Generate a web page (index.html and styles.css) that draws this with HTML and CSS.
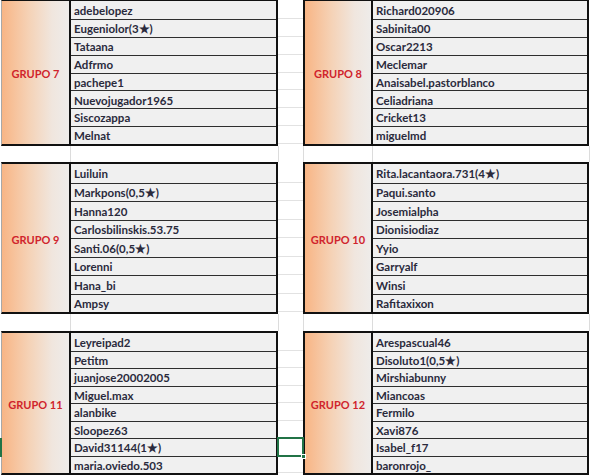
FILE: index.html
```html
<!DOCTYPE html>
<html>
<head>
<meta charset="utf-8">
<link rel="stylesheet" href="styles.css">
</head>
<body>
<div class="sheet">
  <div class="band band1">
    <div class="strip"></div>
    <div class="block a">
      <div class="label">GRUPO 7</div>
      <div class="names">
        <div class="name">adebelopez</div>
        <div class="name">Eugeniolor(3★)</div>
        <div class="name">Tataana</div>
        <div class="name">Adfrmo</div>
        <div class="name">pachepe1</div>
        <div class="name">Nuevojugador1965</div>
        <div class="name">Siscozappa</div>
        <div class="name">Melnat</div>
      </div>
    </div>
    <div class="gapcol"><i></i><i></i><i></i><i></i><i></i><i></i><i></i><i></i></div>
    <div class="block b">
      <div class="label">GRUPO 8</div>
      <div class="names">
        <div class="name">Richard020906</div>
        <div class="name">Sabinita00</div>
        <div class="name">Oscar2213</div>
        <div class="name">Meclemar</div>
        <div class="name">Anaisabel.pastorblanco</div>
        <div class="name">Celiadriana</div>
        <div class="name">Cricket13</div>
        <div class="name">miguelmd</div>
      </div>
    </div>
    <div class="strip"></div>
  </div>

  <div class="spacer gap1"></div>

  <div class="band band2">
    <div class="strip"></div>
    <div class="block a">
      <div class="label">GRUPO 9</div>
      <div class="names">
        <div class="name">Luiluin</div>
        <div class="name">Markpons(0,5★)</div>
        <div class="name">Hanna120</div>
        <div class="name">Carlosbilinskis.53.75</div>
        <div class="name">Santi.06(0,5★)</div>
        <div class="name">Lorenni</div>
        <div class="name">Hana_bi</div>
        <div class="name">Ampsy</div>
      </div>
    </div>
    <div class="gapcol"><i></i><i></i><i></i><i></i><i></i><i></i><i></i><i></i></div>
    <div class="block b">
      <div class="label">GRUPO 10</div>
      <div class="names">
        <div class="name">Rita.lacantaora.731(4★)</div>
        <div class="name">Paqui.santo</div>
        <div class="name">Josemialpha</div>
        <div class="name">Dionisiodiaz</div>
        <div class="name">Yyio</div>
        <div class="name">Garryalf</div>
        <div class="name">Winsi</div>
        <div class="name">Rafitaxixon</div>
      </div>
    </div>
    <div class="strip"></div>
  </div>

  <div class="spacer gap2"></div>

  <div class="band band3">
    <div class="strip"><b class="rowsel"></b></div>
    <div class="block a">
      <div class="label">GRUPO 11</div>
      <div class="names">
        <div class="name">Leyreipad2</div>
        <div class="name">Petitm</div>
        <div class="name">juanjose20002005</div>
        <div class="name">Miguel.max</div>
        <div class="name">alanbike</div>
        <div class="name">Sloopez63</div>
        <div class="name">David31144(1★)</div>
        <div class="name">maria.oviedo.503</div>
      </div>
    </div>
    <div class="gapcol"><i></i><i></i><i></i><i></i><i></i><i></i><i class="sel"><b class="handle"></b></i><i></i></div>
    <div class="block b">
      <div class="label">GRUPO 12</div>
      <div class="names">
        <div class="name">Arespascual46</div>
        <div class="name">Disoluto1(0,5★)</div>
        <div class="name">Mirshiabunny</div>
        <div class="name">Miancoas</div>
        <div class="name">Fermilo</div>
        <div class="name">Xavi876</div>
        <div class="name">Isabel_f17</div>
        <div class="name">baronrojo_</div>
      </div>
    </div>
    <div class="strip"></div>
  </div>
</div>
</body>
</html>
```

FILE: styles.css
```css
* { box-sizing: border-box; }
html, body { margin: 0; padding: 0; background: #ffffff; }
body { width: 590px; height: 476px; overflow: hidden; font-family: Lato, "Open Sans", sans-serif; }

.sheet { display: flex; flex-direction: column; width: 590px; }

.band { display: flex; }
.band1 { height: 146px; }
.band2 { height: 152px; }
.band3 { height: 144px; }

.spacer {
  background:
    linear-gradient(#dcdcdc, #dcdcdc) 70px 0 / 1px 100% no-repeat,
    linear-gradient(#dcdcdc, #dcdcdc) 278px 0 / 1px 100% no-repeat,
    linear-gradient(#dcdcdc, #dcdcdc) 303px 0 / 1px 100% no-repeat,
    linear-gradient(#dcdcdc, #dcdcdc) 372px 0 / 1px 100% no-repeat,
    linear-gradient(#dcdcdc, #dcdcdc) 589px 0 / 1px 100% no-repeat,
    #ffffff;
}
.gap1 { height: 16px; }
.gap2 { height: 17px; }

.strip { width: 1px; position: relative; }
.rowsel { position: absolute; left: 0; width: 2px; top: 107px; height: 19px; background: #217346; }

.block {
  display: grid;
  border-top: 2px solid #111;
  border-bottom: 2px solid #111;
  border-right: 2px solid #111;
}
.band1 .block { border-top-width: 1px; }
.block.a { width: 277px; grid-template-columns: 69px 1fr; border-left: 1px solid #a8a8a8; }
.block.b { width: 286px; grid-template-columns: 68px 1fr; border-left: 2px solid #111; }

.label {
  display: flex;
  align-items: center;
  justify-content: center;
  border-right: 2px solid #111;
  background: linear-gradient(to right, #f8b585 0%, #f5d2b6 40%, #f0e6de 75%, #eeecea 100%);
  color: #d0242c;
  font-weight: 700;
  font-size: 11px;
  padding-top: 2px;
}

.names { display: grid; grid-template-rows: repeat(8, 1fr); background: #f0f0f0; }
.name {
  display: flex;
  align-items: center;
  padding-left: 3px;
  padding-top: 1px;
  border-top: 1px solid #2e2e2e;
  color: #2a2a3c;
  font-weight: 700;
  font-size: 11.5px;
  white-space: nowrap;
  overflow: hidden;
  line-height: 1;
}
.name:first-child { border-top: 0; }

.gapcol {
  width: 25px;
  display: grid;
  grid-template-rows: repeat(8, 1fr);
  background: #ffffff;
}
.gapcol i {
  display: block;
  position: relative;
  border-bottom: 1px solid #e2e2e2;
}
.band1 .gapcol { padding-top: 1px; padding-bottom: 2px; }
.band2 .gapcol, .band3 .gapcol { padding-top: 2px; padding-bottom: 2px; }
.gapcol i.sel { border: 2px solid #217346; margin: -1px -1px -1px -1px; }
.handle { position: absolute; right: -4px; bottom: -4px; width: 5px; height: 5px; background: #217346; border: 1px solid #ffffff; }
```
